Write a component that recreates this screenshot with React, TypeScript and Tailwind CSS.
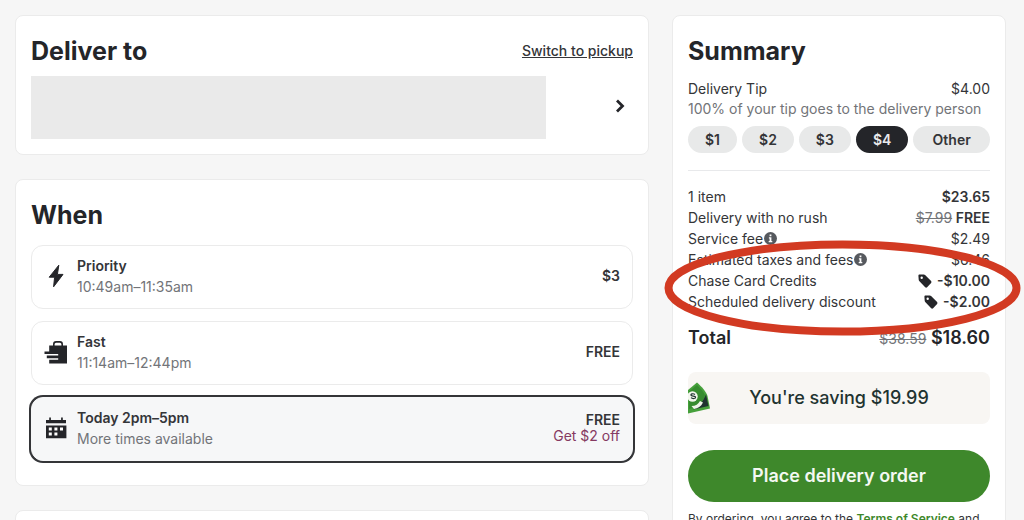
import React, { useState } from 'react'

interface DeliveryOption {
    id: string
    title: string
    subtitle: string
    price: string
    note?: string
    icon: React.ReactNode
}

const BoltIcon = () => (
    <svg width="24" height="24" viewBox="0 0 24 24" fill="#242529" stroke="#242529" strokeWidth="1" strokeLinejoin="round" aria-hidden="true">
        <path d="M14.8 1.2 5.2 13.2h5.4L9.6 22.8 19 10.4h-5.6z" />
    </svg>
)

const BagIcon = () => (
    <svg width="24" height="24" viewBox="0 0 24 24" aria-hidden="true">
        <path d="M9.8 6V4.2c0-1.5.8-2.3 2.3-2.3h3.8c1.5 0 2.3.8 2.3 2.3V6" fill="none" stroke="#242529" strokeWidth="1.6" />
        <path
            d="M5.2 5.6H23v17.8H5.2v-3.6h9v-1.6H2.8v-2.7h11.4v-1.6H.5v-2.4h4.7z"
            fill="#242529"
        />
    </svg>
)

const CalendarIcon = () => (
    <svg width="24" height="24" viewBox="0 0 24 24" aria-hidden="true">
        <path d="M2 4h3.2V1.6h1.7V4h10.2V1.6h1.7V4H22v3.2H2zM2 9.4h20.4v12.8H2z" fill="#242529" />
        <path
            d="M4.8 11.6h3v2.8h-3zM10.4 11.6h3v2.8h-3zM16 11.6h3v2.8h-3zM4.8 16.6h3v2.8h-3zM10.4 16.6h3v2.8h-3z"
            fill="#fff"
        />
    </svg>
)

const InfoIcon = () => (
    <svg width="13" height="13" viewBox="0 0 13 13" aria-hidden="true">
        <circle cx="6.5" cy="6.5" r="6.5" fill="#56595e" />
        <path d="M5.6 2.6h1.8v1.7H5.6zM4.9 5.3h2.5v3.8h.9v1.2H4.7V9.1h.9V6.5h-.7z" fill="#fff" />
    </svg>
)

const TagIcon = () => (
    <svg width="14" height="14" viewBox="0 0 14 14" aria-hidden="true">
        <path
            d="M1.6.6 5.8.4c.5 0 .9.2 1.3.5l6 6.200c.5.6.5 1.200 0 1.800l-4 4.300c-.6.6-1.300.6-1.900 0L1.200 7c-.4-.4-.5-.8-.5-1.200L.4 1.800C.4 1 .8.600 1.600.600zM3.700 2.600a1.200 1.200 0 1 0 0 2.400 1.200 1.200 0 0 0 0-2.400z"
            fill="#242529"
            fillRule="evenodd"
        />
    </svg>
)

const CashIcon = () => (
    <svg width="22" height="32" viewBox="0 0 22 32" aria-hidden="true">
        <path d="M0 8 9 .5c4.500 4 9 9 10.500 13.500l2.500 12.500L0 31.500z" fill="#46a03b" />
        <path d="M1 9.500 9 3c4 4 7 7.500 8 10-1 6-7 12-16 14z" fill="#368c2f" />
        <path d="M18 12.500 20.500 24 5 27.500c6-3 10-8 13-15z" fill="#1f3330" />
        <path d="M3.500 24c4 0 7-2 8.500-5l3 1.500c-2 4-5 6-9 6.500z" fill="#eef5e9" />
        <circle cx="4.500" cy="14.500" r="5.200" fill="#f3f7ee" />
        <path d="M7 12.500c-2-1.500-4.500-.5-4 .8s4.500.2 4.600 1.800-3 2-4.600.5" fill="none" stroke="#1f3330" strokeWidth="1.200" />
    </svg>
)

const options: DeliveryOption[] = [
    { id: 'priority', title: 'Priority', subtitle: '10:49am–11:35am', price: '$3', icon: <BoltIcon /> },
    { id: 'fast', title: 'Fast', subtitle: '11:14am–12:44pm', price: 'FREE', icon: <BagIcon /> },
    { id: 'today', title: 'Today 2pm–5pm', subtitle: 'More times available', price: 'FREE', note: 'Get $2 off', icon: <CalendarIcon /> },
]

const tips = ['$1', '$2', '$3', '$4', 'Other']

const App: React.FC = () => {
    const [selected, setSelected] = useState('today')
    const [tip, setTip] = useState('$4')

    return (
        <div className="h-screen overflow-hidden bg-[#f6f6f6] pt-[15px] pr-[18px] pl-[15px] font-['Inter',sans-serif] text-sm text-[#343538]">
            <div className="grid grid-cols-[minmax(0,1fr)_334px] items-start gap-[23px]">
                <main className="flex flex-col gap-6">
                    {/* Address */}
                    <section className="rounded-lg border border-[#ebebeb] bg-white p-[15px]">
                        <div className="flex items-center justify-between">
                            <h2 className="text-[25px] leading-10 font-bold text-[#242529]">Deliver to</h2>
                            <a href="#pickup" className="font-medium underline">Switch to pickup</a>
                        </div>
                        <div className="mt-[5px] flex items-center">
                            <div className="h-[63px] flex-1 bg-[#eaeaea]" />
                            <button type="button" aria-label="Change address" className="flex w-[87px] justify-end pr-2 pb-1">
                                <svg width="12" height="16" viewBox="0 0 12 16" fill="none" stroke="#242529" strokeWidth="2.8" aria-hidden="true">
                                    <path d="m4 2.500 5.500 5.500L4 13.500" />
                                </svg>
                            </button>
                        </div>
                    </section>

                    {/* Delivery window */}
                    <section className="rounded-lg border border-[#ebebeb] bg-white px-[15px] pt-[15px] pb-6">
                        <h2 className="text-[25px] leading-10 font-bold text-[#242529]">When</h2>
                        <div className="mt-[10px] flex flex-col gap-3">
                            {options.map((option) => (
                                <label
                                    key={option.id}
                                    className={`flex h-16 cursor-pointer items-center rounded-xl border px-3 pb-0.5 ${selected === option.id
                                        ? 'border-[#f6f7f8] bg-[#f6f7f8] ring-2 ring-[#343538]'
                                        : 'border-[#ebebeb] bg-white'
                                        }`}
                                >
                                    <input
                                        type="radio"
                                        name="window"
                                        value={option.id}
                                        checked={selected === option.id}
                                        onChange={() => setSelected(option.id)}
                                        className="sr-only"
                                    />
                                    {option.icon}
                                    <span className="ml-[9px] flex-1 leading-[21px]">
                                        <span className="block font-semibold">{option.title}</span>
                                        <span className="block text-[#727478]">{option.subtitle}</span>
                                    </span>
                                    <span className="text-right leading-4">
                                        <span className="block font-semibold">{option.price}</span>
                                        {option.note && <span className="block text-[#853a61]">{option.note}</span>}
                                    </span>
                                </label>
                            ))}
                        </div>
                    </section>

                    <section className="h-40 rounded-lg border border-[#ebebeb] bg-white" />
                </main>

                {/* Summary */}
                <aside className="rounded-lg border border-[#ebebeb] bg-white p-[15px]">
                    <h2 className="text-[25px] leading-10 font-bold text-[#242529]">Summary</h2>
                    <div className="mt-2 flex justify-between leading-5">
                        <span>Delivery Tip</span>
                        <span>$4.00</span>
                    </div>
                    <p className="leading-5 text-[#727478]">100% of your tip goes to the delivery person</p>
                    <div className="mt-[7px] flex gap-[5px]">
                        {tips.map((amount) => (
                            <button
                                key={amount}
                                type="button"
                                aria-pressed={tip === amount}
                                onClick={() => setTip(amount)}
                                className={`h-[27px] rounded-full px-[17px] font-semibold last:flex-1 ${tip === amount ? 'bg-[#242529] text-[#e8e9eb]' : 'bg-[#e8e9e9]'}`}
                            >
                                {amount}
                            </button>
                        ))}
                    </div>
                    <hr className="mt-[17px] border-[#e8e9eb]" />

                    <div className="relative mt-[15px] leading-[21px]">
                        <div className="flex justify-between">
                            <span>1 item</span>
                            <span className="font-semibold">$23.65</span>
                        </div>
                        <div className="flex justify-between">
                            <span>Delivery with no rush</span>
                            <span className="font-semibold">
                                <s className="font-normal text-[#727478]">$7.99</s> FREE
                            </span>
                        </div>
                        <div className="flex justify-between">
                            <span className="flex items-center gap-px">Service fee<InfoIcon /></span>
                            <span>$2.49</span>
                        </div>
                        <div className="flex justify-between">
                            <span className="flex items-center gap-px">Estimated taxes and fees<InfoIcon /></span>
                            <span>$6.46</span>
                        </div>
                        <div className="flex justify-between">
                            <span>Chase Card Credits</span>
                            <span className="flex items-center gap-[5px] font-semibold"><TagIcon />-$10.00</span>
                        </div>
                        <div className="flex justify-between">
                            <span>Scheduled delivery discount</span>
                            <span className="flex items-center gap-[5px] font-semibold"><TagIcon />-$2.00</span>
                        </div>
                        <div className="mt-3 flex items-center justify-between text-lg leading-7 font-semibold text-[#242529]">
                            <span>Total</span>
                            <span>
                                <s className="text-sm font-normal text-[#727478]">$38.59</s> $18.60
                            </span>
                        </div>

                        {/* Marker around the discounts */}
                        <svg className="pointer-events-none absolute top-[54px] -left-6 max-w-none" width="357" height="96" viewBox="0 0 357 96" aria-hidden="true">
                            <ellipse cx="178.5" cy="48" rx="174" ry="43.5" fill="none" stroke="#d23a22" strokeWidth="8" />
                        </svg>
                    </div>

                    <div className="relative mt-5 flex h-[52px] items-center justify-center rounded-lg bg-[#f8f6f3]">
                        <span className="absolute left-0"><CashIcon /></span>
                        <span className="text-lg font-medium text-[#1f3330]">You're saving $19.99</span>
                    </div>
                    <button type="button" className="mt-[26px] h-[52px] w-full rounded-full bg-[#3e882b] text-lg font-semibold text-[#f4f8f2]">
                        Place delivery order
                    </button>
                    <p className="mt-2 text-xs leading-[18px]">
                        By ordering, you agree to the <a href="#terms" className="font-semibold text-[#3e882b]">Terms of Service</a> and
                    </p>
                </aside>
            </div>
        </div>
    )
}

export default App
